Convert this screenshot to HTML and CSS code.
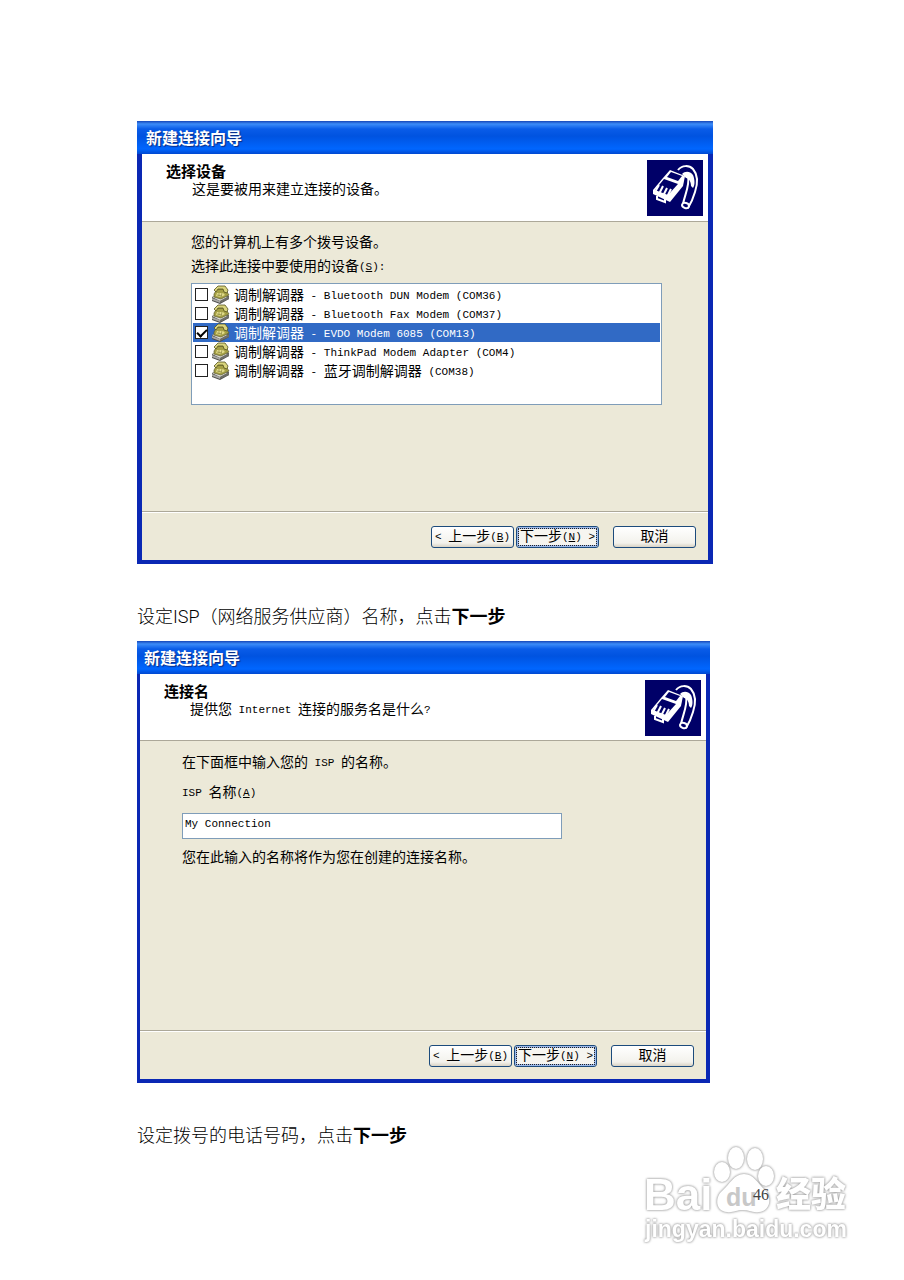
FILE: index.html
```
<!DOCTYPE html>
<html lang="zh-CN">
<head>
<meta charset="UTF-8">
<meta name="viewport" content="width=device-width, initial-scale=1">
<title>新建连接向导</title>
<link rel="stylesheet" href="styles.css">
</head>
<body>
<svg class="defs" aria-hidden="true">
<symbol id="icon-plug" viewBox="0 0 56 56">
<path d="M31 10C35 5 42 5 46 9C51 15 51 23 48 32C46 39 44 43 41 48" fill="none" stroke="#fff" stroke-width="2"/>
<path d="M35 14C38 11 43 11 46 15C48 20 48 25 46 28L44 26C44 22 42 18 39 18Z" fill="#fff"/>
<path d="M41 16C43 25 38 34 36 44" fill="none" stroke="#fff" stroke-width="2"/>
<ellipse cx="38.500" cy="45.500" rx="3.500" ry="2.500" fill="#000068" stroke="#fff" stroke-width="2" transform="rotate(15 38.500 45.500)"/>
<path d="M23 10L38 16L36 26L23 42L6 34V30L16 18Z" fill="#fff"/>
<path d="M24 12L35 16L31 21L20 17Z" fill="#000068"/>
<path d="M17 19L31 24L21 35L8 30Z" fill="#000068"/>
<path d="M12 25L8 32M16 26L12 34M20 28L16 36M24 29L20 37" stroke="#fff" stroke-width="2"/>
<path d="M8 32L12 34M12 33L16 36M16 35L20 38" stroke="#fff"/>
<path d="M10 36V39L18 42V39" fill="none" stroke="#fff" stroke-width="2"/>
</symbol>
<symbol id="icon-modem" viewBox="0 0 19 19">
<path d="M1 12L9 8L18 11V14L9 19L1 16Z" fill="#4a4a48"/>
<path d="M1 12L9 9L17 12L9 16Z" fill="#deded8"/>
<path d="M1 13L9 16V18L1 15Z" fill="#a8a8a4"/>
<path d="M9 16L18 11V14L9 18Z" fill="#6e6e68"/>
<path d="M3 9L6 4L14 4L18 10L10 14L3 12Z" fill="#a5a045" stroke="#5d5b2c" stroke-width=".7"/>
<path d="M3 5L7 1L14 1L17 5L16 8L13 7L12 4L7 4L5 7Z" fill="#d8d37c" stroke="#55531f" stroke-width=".8"/>
<path d="M6 8L12 8L14 10L10 12L5 11Z" fill="#e3dd8c"/>
<path d="M6 10L11 11M8 8L8 11M11 8L10 12" stroke="#8a8640" stroke-width=".7"/>
</symbol>
</svg>

<main class="page">

<section class="dialog">
<h1 class="title-bar">新建连接向导</h1>
<header class="dialog-head">
<div>
<h2>选择设备</h2>
<p>这是要被用来建立连接的设备。</p>
</div>
<svg class="head-icon" aria-hidden="true"><use href="#icon-plug"/></svg>
</header>
<form class="dialog-body device-body">
<p>您的计算机上有多个拨号设备。</p>
<p id="deviceLabel">选择此连接中要使用的设备<span class="en">(<u>S</u>):</span></p>
<ul class="device-list" aria-labelledby="deviceLabel">
<li><label><input type="checkbox"><svg aria-hidden="true"><use href="#icon-modem"/></svg><span>调制解调器<span class="en"> - Bluetooth DUN Modem (COM36)</span></span></label></li>
<li><label><input type="checkbox"><svg aria-hidden="true"><use href="#icon-modem"/></svg><span>调制解调器<span class="en"> - Bluetooth Fax Modem (COM37)</span></span></label></li>
<li class="selected"><label><input type="checkbox" checked><svg aria-hidden="true"><use href="#icon-modem"/></svg><span>调制解调器<span class="en"> - EVDO Modem 6085 (COM13)</span></span></label></li>
<li><label><input type="checkbox"><svg aria-hidden="true"><use href="#icon-modem"/></svg><span>调制解调器<span class="en"> - ThinkPad Modem Adapter (COM4)</span></span></label></li>
<li><label><input type="checkbox"><svg aria-hidden="true"><use href="#icon-modem"/></svg><span>调制解调器<span class="en"> - </span>蓝牙调制解调器<span class="en"> (COM38)</span></span></label></li>
</ul>
</form>
<footer class="dialog-foot">
<button type="button"><span class="en">&lt; </span>上一步<span class="en">(<u>B</u>)</span></button>
<button type="button" class="default">下一步<span class="en">(<u>N</u>) &gt;</span></button>
<button type="button" class="cancel">取消</button>
</footer>
</section>

<p class="step">设定ISP（网络服务供应商）名称，点击<b>下一步</b></p>

<section class="dialog dialog-name">
<h1 class="title-bar">新建连接向导</h1>
<header class="dialog-head">
<div>
<h2>连接名</h2>
<p>提供您<span class="en"> Internet </span>连接的服务名是什么<span class="en">?</span></p>
</div>
<svg class="head-icon" aria-hidden="true"><use href="#icon-plug"/></svg>
</header>
<form class="dialog-body name-body">
<p>在下面框中输入您的<span class="en"> ISP </span>的名称。</p>
<label for="ispName"><span class="en">ISP </span>名称<span class="en">(<u>A</u>)</span></label>
<input type="text" id="ispName" value="My Connection">
<p>您在此输入的名称将作为您在创建的连接名称。</p>
</form>
<footer class="dialog-foot">
<button type="button"><span class="en">&lt; </span>上一步<span class="en">(<u>B</u>)</span></button>
<button type="button" class="default">下一步<span class="en">(<u>N</u>) &gt;</span></button>
<button type="button" class="cancel">取消</button>
</footer>
</section>

<p class="step">设定拨号的电话号码，点击<b>下一步</b></p>

<footer class="page-foot">
<svg class="watermark" viewBox="0 0 230 115" role="img" aria-label="Baidu 经验">
<g class="mark-shape">
<text x="13" y="69" class="mark-bai">Bai</text>
<path d="M113 33C123 33 126 42 134 49C141 55 140 70 128 71C121 72 118 69 112 69C105 69 102 72 96 71C84 70 84 56 91 50C99 43 103 33 113 33Z"/>
<ellipse cx="91" cy="31" rx="8" ry="10"/>
<ellipse cx="105" cy="17" rx="8" ry="11"/>
<ellipse cx="124" cy="18" rx="8" ry="11"/>
<ellipse cx="135" cy="35" rx="8" ry="10"/>
<text x="145" y="66" class="mark-cn">经验</text>
<text x="14" y="96" class="mark-url">jingyan.baidu.com</text>
</g>
<text x="95" y="65" class="mark-du">du</text>
</svg>
<span class="page-number">46</span>
</footer>

</main>
</body>
</html>
```

FILE: styles.css
```
* { box-sizing: border-box; }
body, h1, h2, p, ul { margin: 0; padding: 0; }
body { background: #fff; color: #000; font-family: "Liberation Sans", "Noto Sans CJK SC", sans-serif; font-size: 14px; line-height: 18px; }
.defs { position: absolute; width: 0; height: 0; }
.page { padding: 121px 191px 48px 137px; }

/* 窗口 */
.dialog { display: flex; flex-direction: column; min-height: 443px; background: #ece9d8; border: solid #0a28b4; border-width: 0 5px 4px; }
.dialog-name { min-height: 442px; margin-right: 3px; border-width: 0 4px 4px 3px; }
.title-bar { height: 33px; margin: 0 -5px 0 -5px; padding: 2px 9px 0; line-height: 32px; font-size: 16px; color: #fff; text-shadow: 1px 1px 1px #0a2a80; background: linear-gradient(#1646b8, #3c8cf8 3px, #0a5ce8 8px, #0053e0 15px, #0066ff 28px, #0048d0); }
.dialog-name .title-bar { margin: 0 -4px 0 -3px; padding-left: 7px; }
.dialog-head { display: flex; justify-content: space-between; height: 68px; padding: 6px 5px 0 24px; background: #fff; border-bottom: 1px solid #aca899; }
.dialog-name .dialog-head { height: 67px; }
.dialog-head h2 { padding-top: 3px; font-size: 15px; line-height: 18px; }
.dialog-head p { padding-left: 26px; line-height: 16px; }
.head-icon { width: 56px; height: 56px; background: #000068; }
.en { font-family: "Liberation Mono", monospace; font-size: 11px; line-height: 1; white-space: pre; vertical-align: 1px; }

.dialog-body { flex: 1; }
.device-body { padding: 11px 46px 0 49px; }
.device-body p { margin-bottom: 6px; }
.device-list { height: 122px; padding: 1px; list-style: none; background: #fff; border: 1px solid #7f9db9; }
.device-list label { display: flex; align-items: center; height: 19px; padding-left: 2px; line-height: 16px; }
.device-list svg { width: 19px; height: 19px; margin: 0 4px 0 3px; }
.device-list .selected { background: #316ac5; color: #fff; }
.device-list input { appearance: none; width: 13px; height: 13px; margin: 0; background: #fff; border: 1px solid #222; }
.device-list input:checked::before { content: ""; display: block; width: 8px; height: 4px; margin: 2px 1px; border: solid #000; border-width: 0 0 2px 2px; transform: rotate(-45deg); }
.device-body p + ul { margin-top: 8px; }

.name-body { padding: 12px 144px 0 42px; }
.name-body label { display: block; margin-top: 12px; }
.name-body input { display: block; width: 100%; height: 26px; margin: 12px 0 9px; padding: 0 2px 4px; font-family: "Liberation Mono", monospace; font-size: 11px; background: #fff; border: 1px solid #7f9db9; }

.dialog-foot { display: flex; justify-content: flex-end; height: 49px; padding: 14px 12px 0; border-top: 1px solid #aca899; box-shadow: inset 0 1px #fff; }
.dialog-foot button { width: 83px; height: 22px; margin-left: 2px; padding: 0 0 2px; font-family: inherit; font-size: 14px; line-height: 18px; color: #000; white-space: nowrap; background: linear-gradient(#fff, #f3f2ec 80%, #d8d2c4); border: 1px solid #1c4b7c; border-radius: 3px; }
.dialog-foot .default { background: #f6f5f0; box-shadow: inset 0 0 0 2px #9db9ea; outline: 1px dotted #222; outline-offset: -3px; }
.dialog-foot .cancel { margin-left: 14px; }

/* 正文 */
.step { padding: 40px 0 12px; font-family: Roboto, "Noto Sans CJK SC", sans-serif; font-size: 18px; line-height: 25px; font-weight: 300; }
.step b { font-weight: 700; }

.page-foot { position: relative; height: 70px; padding-top: 26px; }
.page-number { display: block; position: relative; margin-right: -56px; text-align: right; font-family: "Liberation Serif", serif; font-size: 16px; color: #444; }
.watermark { position: absolute; top: -19px; right: -148px; width: 230px; height: 115px; }
.mark-shape { fill: #fff; filter: drop-shadow(0 0 1px #999) drop-shadow(0 0 1px #ccc); }
.mark-bai { font-size: 44px; font-weight: 700; }
.mark-cn { font-size: 35px; font-weight: 900; }
.mark-url { font-size: 23px; font-weight: 700; }
.mark-du { font-size: 25px; font-weight: 700; fill: #c8c8c8; }
```
